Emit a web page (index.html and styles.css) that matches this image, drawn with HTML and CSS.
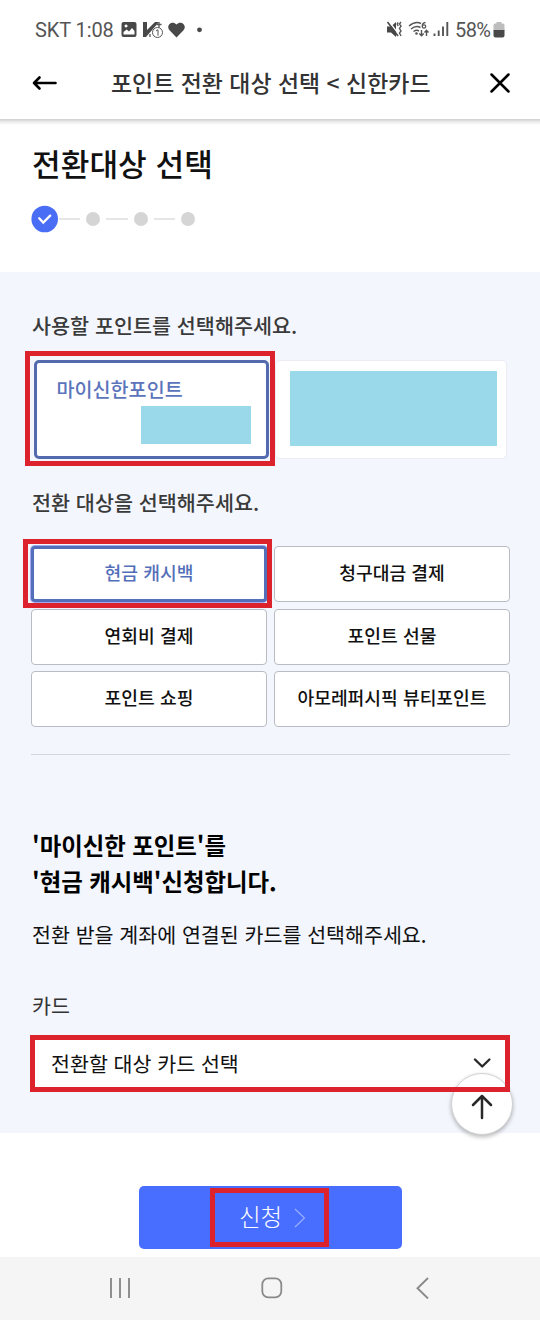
FILE: index.html
```html
<!DOCTYPE html>
<html lang="ko">
<head>
<meta charset="utf-8">
<title>포인트 전환 대상 선택</title>
<link rel="stylesheet" href="styles.css">
</head>
<body>
<div class="status">
  <span class="carrier">SKT 1:08</span>
  <svg class="status-left" width="84" height="20" viewBox="0 0 84 20">
    <path fill="#484848" fill-rule="evenodd" d="M2.500 2h11a2 2 0 0 1 2 2v11a2 2 0 0 1-2 2h-11a2 2 0 0 1-2-2V4a2 2 0 0 1 2-2zM2.500 12v2.500h11V11l-2.500-3-3 3.500-2.300-2zM5 4.500a1.500 1.500 0 1 0 .1 0z"/>
    <path fill="#484848" d="M22 2h4v8l8-8h4L25 17h-3z"/>
    <path d="M38 2v6M35.500 4.500h5M29 14v3" stroke="#555" stroke-width="1.300"/>
    <circle cx="36.500" cy="12.500" r="5" fill="#fff" stroke="#555"/>
    <path d="M35 11l2-1.300v6" fill="none" stroke="#555"/>
    <path fill="#484848" d="M55.500 17.500l-7-7.200c-4-4.700 2.500-10.600 7-5.800 4.500-4.800 11 1.100 7 5.800z"/>
    <circle cx="78.500" cy="9.800" r="2.400" fill="#484848"/>
  </svg>
  <svg class="status-right" width="66" height="20" viewBox="0 0 66 20">
    <path fill="#484848" d="M1 6.500h4l5-4.500v15l-5-4.500H1z"/>
    <path d="M2.500 1L13 14.500" stroke="#fff" stroke-width="1.300"/>
    <path d="M1.500 2L12 16" stroke="#484848" stroke-width="1.600"/>
    <path d="M12.200 2.500l-1 1.500 1 2M15 2l-1.500 2 1.500 2-1.500 2.500L15 11l-1.500 2 1.500 3" fill="none" stroke="#555" stroke-width="1.400"/>
    <path d="M23 6q6.500-5.500 12-2.500M25 9q5-4 9.500-1.500M27.500 11.500q3-2 5.500-.5" fill="none" stroke="#555" stroke-width="1.500"/>
    <circle cx="30.500" cy="13.500" r="1.300" fill="#555"/>
    <path d="M39.500 2.500Q36 3 36.300 6.200" fill="none" stroke="#555" stroke-width="1.300"/>
    <circle cx="38" cy="6.500" r="1.700" fill="none" stroke="#555" stroke-width="1.300"/>
    <path d="M35.500 10v5.500M33.300 13.500l2.200 2.300 2.200-2.300M40.500 16v-5.500M38.500 12.500l2-2.300 2 2.300" fill="none" stroke="#555" stroke-width="1.400"/>
    <path d="M48.500 13.500V16M52.700 10.500V16M57 6.500V16M61.300 2v14" stroke="#555" stroke-width="1.900"/>
  </svg>
  <span class="percent">58%</span>
  <svg class="battery" width="12" height="18" viewBox="0 0 12 18">
    <path fill="#bdbdbd" d="M3.500 2.500V1h5v1.500H10q1.500 0 1.500 1.500v6H.5V4Q.5 2.500 2 2.500z"/>
    <path fill="#484848" d="M.5 9h11v5.500q0 2-2 2h-7q-2 0-2-2z"/>
  </svg>
</div>
<header class="header">
  <svg class="back" width="26" height="20" viewBox="0 0 26 20"><path d="M23.500 10H2M7.500 4.500L2 10l5.500 5.500" fill="none" stroke="#000" stroke-width="2.600" stroke-linecap="round" stroke-linejoin="round"/></svg>
  <h1 class="header-title">포인트 전환 대상 선택 &lt; 신한카드</h1>
  <svg class="close" width="22" height="22" viewBox="0 0 22 22"><path d="M2.500 2.500l17 17M19.500 2.500l-17 17" stroke="#000" stroke-width="2.500" stroke-linecap="round"/></svg>
</header>
<section class="intro">
  <h2 class="intro-title">전환대상 선택</h2>
  <div class="steps">
    <svg width="28" height="28" viewBox="0 0 28 28"><circle cx="13.700" cy="14" r="13.300" fill="#4a6df6"/><path d="M8.200 13.300l4 4.300 7-7" fill="none" stroke="#fff" stroke-width="2.300" stroke-linecap="round"/></svg>
    <i class="line"></i><i class="dot"></i><i class="line"></i><i class="dot"></i><i class="line"></i><i class="dot"></i>
  </div>
</section>
<main class="panel">
  <h3 class="label">사용할 포인트를 선택해주세요.</h3>
  <div class="cards">
    <div class="card card-on"><span>마이신한포인트</span><i class="mask mask-small"></i><i class="mark mark-card"></i></div>
    <div class="card"><i class="mask mask-large"></i></div>
  </div>
  <h3 class="label label-target">전환 대상을 선택해주세요.</h3>
  <div class="options">
    <div class="option option-on">현금 캐시백<i class="mark mark-option"></i></div>
    <div class="option">청구대금 결제</div>
    <div class="option">연회비 결제</div>
    <div class="option">포인트 선물</div>
    <div class="option">포인트 쇼핑</div>
    <div class="option">아모레퍼시픽 뷰티포인트</div>
  </div>
  <div class="summary">
    <h3 class="summary-title">'마이신한 포인트'를<br>'현금 캐시백'신청합니다.</h3>
    <p class="summary-text">전환 받을 계좌에 연결된 카드를 선택해주세요.</p>
    <div class="field-label">카드</div>
  </div>
  <div class="select">
    <span>전환할 대상 카드 선택</span>
    <svg width="20" height="14" viewBox="0 0 20 14"><path d="M3 3.500l7.200 7 7.200-7" fill="none" stroke="#292929" stroke-width="2.400" stroke-linecap="round" stroke-linejoin="round"/></svg>
    <div class="to-top"><svg width="24" height="28" viewBox="0 0 24 28"><path d="M12 25V3M3 12l9-9 9 9" fill="none" stroke="#292929" stroke-width="2.500" stroke-linecap="round" stroke-linejoin="round"/></svg></div>
    <i class="mark mark-select"></i>
  </div>
</main>
<footer class="footer">
  <div class="submit"><span>신청</span><svg width="12" height="20" viewBox="0 0 12 20"><path d="M1 1l9.500 9L1 19" fill="none" stroke="#9bb0ff" stroke-width="1.100"/></svg><i class="mark mark-submit"></i></div>
</footer>
<nav class="nav">
  <svg width="22" height="22" viewBox="0 0 22 22"><path d="M2 1v20M11 1v20M20 1v20" stroke="#8a8a8a" stroke-width="1.900"/></svg>
  <svg width="22" height="22" viewBox="0 0 22 22"><rect x="1.300" y="1.300" width="19" height="19" rx="6" fill="none" stroke="#8a8a8a" stroke-width="1.800"/></svg>
  <svg width="22" height="22" viewBox="0 0 22 22"><path d="M16 1L5.500 11.200 16 21.500" fill="none" stroke="#8a8a8a" stroke-width="1.900"/></svg>
</nav>
</body>
</html>
```
FILE: styles.css
```css
* { box-sizing: border-box; }
body {
  margin: 0;
  width: 540px;
  height: 1320px;
  overflow: hidden;
  background: #fff;
  color: #111;
  font-family: "Noto Sans CJK KR", sans-serif;
}
h1, h2, h3, p { margin: 0; white-space: nowrap; }
svg, i { display: block; flex: none; }
.status {
  display: flex;
  align-items: center;
  height: 59px;
  padding-left: 35px;
  font: 20px/24px Roboto, sans-serif;
  color: #555;
}
.carrier { width: 86px; letter-spacing: -0.1px; white-space: nowrap; }
.status-right { margin-left: 181px; }
.percent { width: 36px; margin-left: 3px; letter-spacing: -0.6px; }
.battery { margin-left: 2px; }
.header {
  display: flex;
  align-items: center;
  height: 60px;
  padding: 0 29px 12px 32px;
}
.header-title {
  margin-left: 53px;
  padding-bottom: 2px;
  width: 378px;
  font-size: 22.950px;
  font-weight: 500;
  line-height: 34px;
  color: #333;
}
.intro {
  height: 153px;
  padding: 22px 31px 0;
  background: linear-gradient(#cfcfcf, #ececec 3px, #fff 6px);
}
.intro-title {
  padding-left: 1px;
  margin-top: -1px;
  font-size: 31.200px;
  font-weight: 500;
  line-height: 46px;
}
.steps { display: flex; align-items: center; margin-top: 19px; }
.line { width: 21.300px; height: 2px; background: #e6e6e6; }
.dot { width: 14px; height: 14px; margin: 0 6px; border-radius: 50%; background: #d5d5d5; }
.panel { height: 861px; padding: 38px 30px 0 31px; background: #f3f6fc; }
.label {
  padding-left: 1px;
  font-size: 20.700px;
  font-weight: 500;
  line-height: 30px;
  color: #3a3a3a;
}
.cards { display: flex; gap: 6px; padding: 0 2px 0 3px; margin-top: 20px; }
.card {
  position: relative;
  width: 232px;
  height: 99px;
  border: 1px solid #eaedf2;
  border-radius: 5px;
  background: #fff;
}
.card-on {
  width: 235px;
  padding: 12px 15px 0 19.500px;
  border: 3px solid #536aaf;
  font-size: 19.600px;
  font-weight: 500;
  line-height: 28px;
  color: #5b74bb;
}
.mask { background: #9ad9e9; }
.mask-small { width: 110px; height: 38px; margin: 3px 0 0 auto; }
.mask-large { width: 207px; height: 75px; margin: 10px 0 0 14px; }
.mark { position: absolute; z-index: 2; border: 5px solid #dc222c; }
.mark-card { inset: -12px -9px -10px -12px; }
.label-target { margin-top: 28px; }
.options {
  display: grid;
  grid-template-columns: 236px 236px;
  grid-auto-rows: 56px;
  gap: 6.500px 7px;
  padding-bottom: 27px;
  margin-top: 29px;
  border-bottom: 1px solid #d3d6da;
}
.option {
  position: relative;
  display: flex;
  align-items: center;
  justify-content: center;
  padding-bottom: 3px;
  border: 1px solid #b9bcc2;
  border-radius: 4px;
  background: #fff;
  font-size: 18.200px;
  font-weight: 500;
  line-height: 27px;
  white-space: nowrap;
}
.option-on {
  border: 3px solid #536fb9;
  box-shadow: 0 0 0 1px #a1a9ec;
  color: #536fb9;
}
.mark-option { inset: -10px -8px -9px -11px; }
.summary { padding: 72px 0 0 1px; }
.summary-title {
  font-size: 23.400px;
  font-weight: 700;
  line-height: 36px;
  color: #000;
}
.summary-text { margin-top: 20px; font-size: 20.600px; line-height: 30px; }
.field-label { margin-top: 41px; font-size: 20.600px; line-height: 30px; color: #333; }
.select {
  position: relative;
  display: flex;
  align-items: center;
  justify-content: space-between;
  height: 56px;
  padding: 0 18px 0 20px;
  margin-top: 15px;
  background: #fff;
  font-size: 20.600px;
  line-height: 30px;
}
.mark-select { inset: 0 0 -1px -1px; }
.to-top {
  position: absolute;
  left: 420px;
  top: 38px;
  display: grid;
  place-items: center;
  width: 62px;
  height: 62px;
  padding-top: 5px;
  border: 1px solid #d2d2d4;
  border-radius: 50%;
  background: #fff;
  box-shadow: 0 2px 4px rgba(0, 0, 0, 0.28);
}
.footer { height: 124px; padding: 53px 0 0 139px; }
.submit {
  position: relative;
  display: flex;
  align-items: center;
  width: 263px;
  height: 63px;
  padding: 0 0 4px 100px;
  border-radius: 5px;
  background: #486eff;
  color: #fff;
  font-size: 23.500px;
  font-weight: 300;
  line-height: 34px;
}
.submit span { width: 55px; }
.submit svg { margin-top: 5px; }
.mark-submit { inset: 2px 73px 2px 71px; }
.nav {
  display: flex;
  justify-content: space-between;
  height: 63px;
  padding: 20px 106px 0 109px;
  background: #f5f5f5;
}
```
